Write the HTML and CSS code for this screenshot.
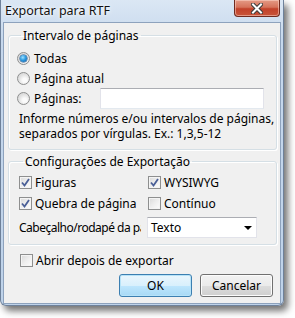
FILE: index.html
```html
<!DOCTYPE html>
<html lang="pt">
<head>
  <meta charset="UTF-8">
  <title>Exportar para RTF</title>
  <link rel="stylesheet" href="styles.css">
</head>
<body>

  <div class="window">
    <div class="titlebar">
      <span class="title">Exportar para RTF</span>
      <span class="close">
        <svg width="14" height="11" viewBox="0 0 14 11">
          <path d="M3 1.5 L11 9.5 M11 1.5 L3 9.5" stroke="#3b3b3b" stroke-width="4" stroke-linecap="round"/>
          <path d="M3 1.5 L11 9.5 M11 1.5 L3 9.5" stroke="#fff" stroke-width="2" stroke-linecap="square"/>
        </svg>
      </span>
    </div>

    <div class="client">
      <fieldset class="group range">
        <legend>Intervalo de páginas</legend>
        <div class="row"><span class="radio checked"></span>Todas</div>
        <div class="row"><span class="radio"></span>Página atual</div>
        <div class="row">
          <span class="pages-label"><span class="radio"></span>Páginas:</span>
          <span class="textbox"></span>
        </div>
        <p class="hint">Informe números e/ou intervalos de páginas,<br>separados por vírgulas. Ex.: 1,3,5-12</p>
      </fieldset>

      <fieldset class="group options">
        <legend>Configurações de Exportação</legend>
        <div class="opt-grid">
          <div class="row"><span class="check on"><svg width="9" height="9" viewBox="0 0 9 9"><path d="M1 4.5 L3.5 7.5 L8 1" fill="none" stroke="#4a5f97" stroke-width="1.8"/></svg></span>Figuras</div>
          <div class="row"><span class="check on"><svg width="9" height="9" viewBox="0 0 9 9"><path d="M1 4.5 L3.5 7.5 L8 1" fill="none" stroke="#4a5f97" stroke-width="1.8"/></svg></span>WYSIWYG</div>
          <div class="row"><span class="check on"><svg width="9" height="9" viewBox="0 0 9 9"><path d="M1 4.5 L3.5 7.5 L8 1" fill="none" stroke="#4a5f97" stroke-width="1.8"/></svg></span>Quebra de página</div>
          <div class="row"><span class="check"></span>Contínuo</div>
        </div>
        <div class="combo-row">
          <span class="combo-label">Cabeçalho/rodapé da página</span>
          <span class="combo">Texto<span class="arrow"></span></span>
        </div>
      </fieldset>

      <div class="row open-after"><span class="check"></span>Abrir depois de exportar</div>

      <div class="buttons">
        <span class="btn default">OK</span>
        <span class="btn">Cancelar</span>
      </div>
    </div>
  </div>

</body>
</html>
```

FILE: styles.css
```css
body {
  margin: 0;
  width: 295px;
  height: 318px;
  overflow: hidden;
  background-color: #fff;
  font-family: "Noto Sans", sans-serif;
  font-size: 12px;
  color: #000;
}

.window {
  box-sizing: border-box;
  width: 284px;
  height: 306px;
  border: 1px solid #6e819a;
  border-top: none;
  border-radius: 0 0 6px 6px;
  background: linear-gradient(to bottom, #dbe7f4 0px, #c6d8ed 40px, #bed2e9 100%);
  box-shadow: 4px 5px 7px rgba(0, 0, 0, 0.55);
  padding: 0 2px 2px 2px;
}

.titlebar {
  height: 22px;
  display: flex;
  justify-content: space-between;
  align-items: flex-start;
}

.title {
  margin-top: 2px;
  margin-left: 2px;
  font-size: 12.5px;
  color: #111;
  text-shadow: 0 0 6px #fff, 0 0 3px #fff;
}

.close {
  width: 46px;
  height: 17px;
  box-sizing: border-box;
  margin-right: 1px;
  border: 1px solid #6f2a1f;
  border-top: none;
  border-radius: 0 0 4px 4px;
  background: linear-gradient(to bottom, #e49a86 0%, #d6735b 45%, #c2412a 55%, #c8553a 100%);
  box-shadow: inset 0 0 0 1px rgba(255, 220, 210, 0.5);
  display: flex;
  align-items: center;
  justify-content: center;
}

.client {
  box-sizing: border-box;
  height: 282px;
  border: 1px solid #8da2bd;
  background-color: #f0f0f0;
  padding: 5px 3px 0 4px;
}

.group {
  margin: 0;
  padding: 0;
  border: 1px solid #d5dfe5;
  border-radius: 3px;
  box-shadow: inset 1px 1px 0 #fff, 1px 1px 0 #fff;
  min-inline-size: 0;
}

.group legend {
  margin-left: 4px;
  padding: 0 2px;
  line-height: 15px;
}

.row {
  display: flex;
  align-items: center;
  height: 20px;
  white-space: nowrap;
}

.range {
  height: 122px;
  box-sizing: border-box;
  padding: 5px 0 0 8px;
}

.radio {
  flex-shrink: 0;
  box-sizing: border-box;
  width: 13px;
  height: 13px;
  border-radius: 50%;
  border: 1px solid #8e8f8f;
  background: radial-gradient(circle at 60% 65%, #fbfbfb 20%, #e3e3e3 55%, #cfcfcf 100%);
  margin-right: 4px;
  display: flex;
  align-items: center;
  justify-content: center;
}

.radio.checked::after {
  content: "";
  width: 7px;
  height: 7px;
  border-radius: 50%;
  background: radial-gradient(circle at 40% 35%, #9fe0ff 0%, #2d9be0 45%, #11549a 100%);
  box-shadow: 0 0 0 0.5px #1c4f86;
}

.pages-label {
  display: flex;
  align-items: center;
  width: 83px;
  flex-shrink: 0;
}

.textbox {
  flex-shrink: 0;
  box-sizing: border-box;
  width: 164px;
  height: 21px;
  background-color: #fff;
  border: 1px solid #e2e3ea;
  border-top-color: #abadb3;
  border-bottom-color: #e3e9ef;
}

.hint {
  margin: 3px 0 0 2px;
  line-height: 15px;
}

.options {
  margin-top: 4px;
  height: 91px;
  box-sizing: border-box;
  padding: 3px 0 0 10px;
}

.opt-grid {
  display: grid;
  grid-template-columns: 129px 1fr;
  grid-auto-rows: 21px;
}

.opt-grid .row {
  height: 21px;
}

.check {
  flex-shrink: 0;
  box-sizing: border-box;
  width: 13px;
  height: 13px;
  border: 1px solid #8e8f8f;
  background: linear-gradient(135deg, #d9d9d9 0%, #eeeeee 50%, #fdfdfd 100%);
  box-shadow: inset 0 0 0 1px #f4f4f4;
  margin-right: 3px;
  display: flex;
  align-items: center;
  justify-content: center;
}

.combo-row {
  display: flex;
  align-items: center;
  margin-top: 3px;
}

.combo-label {
  flex-shrink: 0;
  width: 122px;
  margin-right: 6px;
  overflow: hidden;
  white-space: nowrap;
  letter-spacing: -0.5px;
}

.combo {
  flex-shrink: 0;
  box-sizing: border-box;
  width: 110px;
  height: 21px;
  background-color: #fff;
  border: 1px solid #e2e3ea;
  border-top-color: #abadb3;
  padding-left: 3px;
  display: flex;
  align-items: center;
  justify-content: space-between;
}

.arrow {
  width: 0;
  height: 0;
  border-left: 4px solid transparent;
  border-right: 4px solid transparent;
  border-top: 4px solid #000;
  margin-right: 4px;
}

.open-after {
  margin: 6px 0 0 12px;
  height: 19px;
}

.buttons {
  display: flex;
  justify-content: flex-end;
  gap: 8px;
  margin: 4px 4px 0 0;
}

.btn {
  box-sizing: border-box;
  width: 73px;
  height: 23px;
  border: 1px solid #707070;
  border-radius: 3px;
  background: linear-gradient(to bottom, #f2f2f2 0%, #ebebeb 50%, #dddddd 51%, #cfcfcf 100%);
  box-shadow: inset 0 0 0 1px #fcfcfc;
  display: flex;
  align-items: center;
  justify-content: center;
}

.btn.default {
  border-color: #3c7fb1;
  background: linear-gradient(to bottom, #eaf6fd 0%, #d9f0fc 50%, #bee6fd 51%, #a7d9f5 100%);
  box-shadow: inset 0 0 0 1px #b7e3f8;
}
```
